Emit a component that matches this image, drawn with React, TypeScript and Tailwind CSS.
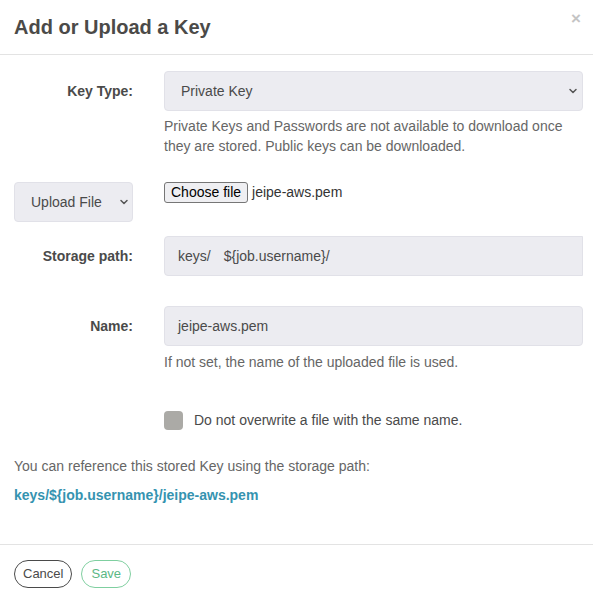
import { ChevronDown } from 'lucide-react';

const labelCls = 'flex items-center justify-end h-[40px] text-[14px] font-bold text-[#4a4a4a]';
const fieldCls = 'h-[40px] bg-[#ececf1] border border-[#e1e1e8] flex items-center text-[14px] text-[#4a4a4a]';

export default function App() {
  return (
    <div
      className="w-[593px] h-[599px] bg-white text-[#4a4a4a]"
      style={{ fontFamily: '"Liberation Sans", Arial, sans-serif' }}
    >
      {/* header */}
      <div className="h-[55px] border-b border-[#e3e3e3] pl-[14px] pr-[12px] flex justify-between">
        <h2 className="pt-[12px] text-[20px] font-bold text-[#4b4a48]">Add or Upload a Key</h2>
        <span className="pt-[9px] text-[17px] font-bold text-[#c4c4c4] leading-[20px]">×</span>
      </div>

      {/* body */}
      <div className="pl-[14px] pr-[10px] pt-[16px] h-[490px] border-b border-[#e3e3e3]">
        <div className="grid grid-cols-[119px_1fr] gap-x-[31px]">
          <div className={labelCls}>Key Type:</div>
          <div className={`${fieldCls} rounded-[4px] pl-[16px] pr-[3px] justify-between`}>
            <span>Private Key</span>
            <ChevronDown size={12} strokeWidth={3} className="text-[#555]" />
          </div>

          <div />
          <p className="mt-[5px] text-[14px] leading-[20px] text-[#666]">
            Private Keys and Passwords are not available to download once they are stored. Public keys can be
            downloaded.
          </p>

          <div className={`${fieldCls} mt-[26px] rounded-[4px] pl-[16px] pr-[2px] justify-between`}>
            <span>Upload File</span>
            <ChevronDown size={12} strokeWidth={3} className="text-[#555]" />
          </div>
          <div className="mt-[26px] flex items-start gap-[4px] text-[14px]">
            <span className="h-[21px] px-[6px] flex items-center border border-[#767676] rounded-[3px] bg-[#efeff2] text-black">
              Choose file
            </span>
            <span className="leading-[21px] text-[#333]">jeipe-aws.pem</span>
          </div>

          <div className={`${labelCls} mt-[14px]`}>Storage path:</div>
          <div className={`${fieldCls} mt-[14px] rounded-l-[4px] pl-[13px]`}>
            <span>keys/</span>
            <span className="ml-[13px]">{'${job.username}/'}</span>
          </div>

          <div className={`${labelCls} mt-[30px]`}>Name:</div>
          <div className={`${fieldCls} mt-[30px] rounded-[4px] pl-[13px]`}>jeipe-aws.pem</div>

          <div />
          <p className="mt-[6px] text-[14px] leading-[20px] text-[#666]">
            If not set, the name of the uploaded file is used.
          </p>

          <div />
          <label className="mt-[38px] flex items-center gap-[11px] h-[20px] text-[14px] text-[#4a4a4a]">
            <span className="w-[19px] h-[19px] rounded-[4px] bg-[#abaaa6]" />
            Do not overwrite a file with the same name.
          </label>
        </div>

        <p className="mt-[26px] text-[14px] leading-[20px] text-[#666]">
          You can reference this stored Key using the storage path:
        </p>
        <p className="mt-[9px] text-[14px] leading-[20px] font-bold text-[#3593b0]">
          {'keys/${job.username}/jeipe-aws.pem'}
        </p>
      </div>

      {/* footer */}
      <div className="pl-[14px] pt-[15px] flex gap-[9px]">
        <button className="h-[28px] px-[8px] rounded-full border border-[#4a4a4a] text-[13px] text-[#4a4a4a] bg-white">
          Cancel
        </button>
        <button className="h-[28px] px-[9px] rounded-full border border-[#7fcfa0] text-[13px] text-[#5bb884] bg-white">
          Save
        </button>
      </div>
    </div>
  );
}
